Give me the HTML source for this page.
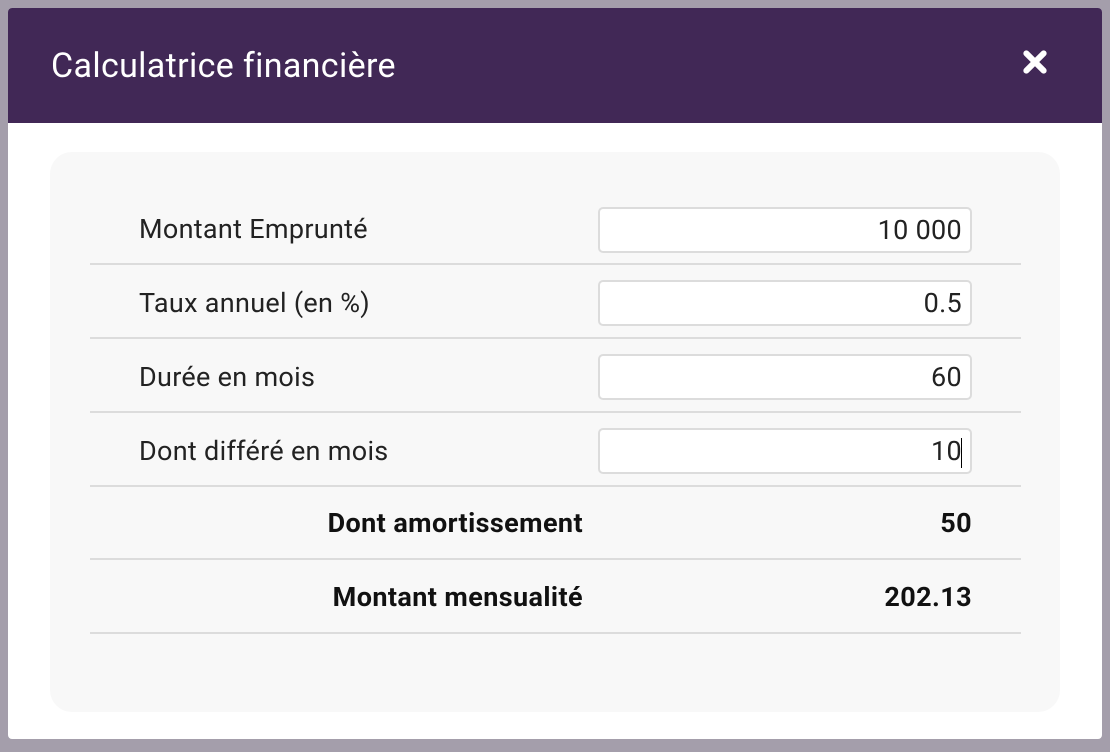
<!DOCTYPE html>
<html><head><meta charset="utf-8"><style>
body{margin:0;width:1110px;height:752px;background:#a49eab;font-family:"Roboto","Liberation Sans",sans-serif;overflow:hidden;position:relative}
.modal{position:absolute;left:8px;top:8px;width:1094px;height:731px;background:#fff;border-radius:4px;overflow:hidden}
.hd{height:115px;background:#412856;color:#fff;position:relative}
.hd h1{margin:0;position:absolute;left:43px;top:38px;font-size:34px;font-weight:normal;letter-spacing:0.35px}
.x{position:absolute;left:1014px;top:41px}
.panel{position:absolute;left:42px;top:144px;width:1010px;height:560px;background:#f8f8f8;border-radius:22px}
.row{position:absolute;left:40px;width:931px;border-bottom:2px solid #dcdcdc}
.lbl{position:absolute;left:89px;font-size:27px;color:#222;letter-spacing:0.3px}
.inp{position:absolute;left:548px;width:374px;height:46px;border:2px solid #dcdcdc;border-radius:5px;background:#fff;font-size:27px;text-align:right;box-sizing:border-box;padding-right:8px;line-height:43px;color:#222;letter-spacing:0.3px}
.b{position:absolute;font-size:27px;font-weight:bold;color:#111;letter-spacing:0.4px}
</style></head><body>
<div class="modal">
<div class="hd"><h1>Calculatrice financière</h1>
<svg class="x" width="26" height="26" viewBox="0 0 24 24"><path d="M4 4L20 20M20 4L4 20" stroke="#fff" stroke-width="5.5" stroke-linecap="round"/></svg></div>
<div class="panel">
<div class="row" style="top:0;height:111px"></div>
<div class="lbl" style="top:61px">Montant Emprunté</div><div class="inp" style="top:55px">10 000</div>
<div class="row" style="top:113px;height:72px"></div>
<div class="lbl" style="top:135px">Taux annuel (en %)</div><div class="inp" style="top:128px">0.5</div>
<div class="row" style="top:187px;height:72px"></div>
<div class="lbl" style="top:209px">Durée en mois</div><div class="inp" style="top:202px">60</div>
<div class="row" style="top:261px;height:72px"></div>
<div class="lbl" style="top:283px">Dont différé en mois</div><div class="inp" style="top:276px">10<span style="display:inline-block;width:1px;height:30px;background:#000;vertical-align:middle;margin-left:-1px"></span></div>
<div class="row" style="top:335px;height:71px"></div>
<div class="b" style="right:477px;top:355px">Dont amortissement</div><div class="b" style="right:88px;top:355px">50</div>
<div class="row" style="top:408px;height:72px"></div>
<div class="b" style="right:477px;top:429px">Montant mensualité</div><div class="b" style="right:88px;top:429px">202.13</div>
</div></div>
</body></html>
